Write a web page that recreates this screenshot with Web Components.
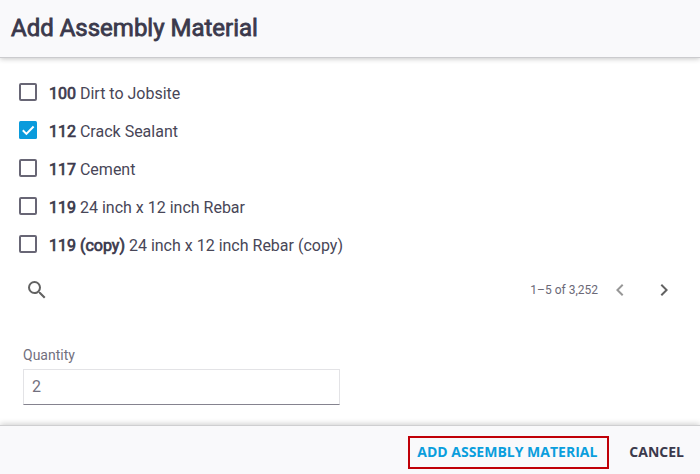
<!DOCTYPE html>
<html lang="en">
<head>
<meta charset="utf-8">
<title>Add Assembly Material</title>
<style>
body { margin: 0; font-family: Roboto, "Liberation Sans", sans-serif; color: #3b394c; background: #fff; }
</style>
</head>
<body>
<material-dialog>
  <span slot="title">Add Assembly Material</span>
  <check-row code="100">Dirt to Jobsite</check-row>
  <check-row code="112" checked>Crack Sealant</check-row>
  <check-row code="117">Cement</check-row>
  <check-row code="119">24 inch x 12 inch Rebar</check-row>
  <check-row code="119 (copy)">24 inch x 12 inch Rebar (copy)</check-row>
  <list-pager>1–5 of 3,252</list-pager>
  <text-field label="Quantity">2</text-field>
  <dialog-button slot="actions" primary>ADD ASSEMBLY MATERIAL</dialog-button>
  <dialog-button slot="actions">CANCEL</dialog-button>
</material-dialog>
<script>
class BaseElement extends HTMLElement {
  render(html) { this.attachShadow({ mode: 'open' }).innerHTML = html; }
}

customElements.define('material-dialog', class extends BaseElement {
  connectedCallback() {
    this.render(`<style>
      :host { display: flex; flex-direction: column; height: 474px; overflow: hidden; box-sizing: border-box; }
      header { height: 57px; box-sizing: border-box; padding: 0 11px; background: #f9f9fb; flex: none;
        box-shadow: 0 1px 0 #cbcbce, 0 2px 5px rgba(0,0,0,.22); }
      h1 { margin: 0; font-size: 24px; font-weight: 400; line-height: 56px; -webkit-text-stroke: .8px #3b394c; white-space: nowrap; }
      main { flex: 1; padding-top: 17px; }
      footer { height: 48px; box-sizing: border-box; flex: none; display: flex; justify-content: flex-end;
        padding: 10px 6px 5px 0; gap: 10px; background: #f9f9fb;
        box-shadow: 0 -1px 0 #cfcfd1, 0 -2px 6px rgba(0,0,0,.2); }
    </style>
    <header><h1><slot name="title"></slot></h1></header>
    <main><slot></slot></main>
    <footer><slot name="actions"></slot></footer>`);
  }
});

customElements.define('check-row', class extends BaseElement {
  connectedCallback() {
    const box = this.hasAttribute('checked')
      ? '<rect width="18" height="18" rx="1.5" fill="#0a9bdc"/><path d="M3.8 9.3l3.6 3.6 7.2-7.4" fill="none" stroke="#fff" stroke-width="2"/>'
      : '<rect x="1" y="1" width="16" height="16" rx="1" fill="none" stroke="#686675" stroke-width="2"/>';
    this.render(`<style>
      :host { display: flex; align-items: center; height: 38px; padding-left: 19px; gap: 12px; font-size: 16px; line-height: 20px; white-space: nowrap; color: #484657; }
      svg { width: 18px; height: 18px; flex: none; margin-bottom: 2px; }
      span { padding-top: 2px; }
      b { font-weight: 400; color: #3b394c; -webkit-text-stroke: .7px #3b394c; }
    </style>
    <svg viewBox="0 0 18 18">${box}</svg><span><b>${this.getAttribute('code')}</b> <slot></slot></span>`);
  }
});

customElements.define('list-pager', class extends BaseElement {
  connectedCallback() {
    this.render(`<style>
      :host { display: flex; align-items: center; height: 48px; margin-top: 2px; padding: 0 24px 0 25px; font-size: 12px; color: #6b6977; }
      svg { width: 24px; height: 24px; fill: #626262; }
      .search { margin-right: auto; }
      .prev { margin-left: 10px; fill: #979797; }
      .next { margin-left: 20px; }
    </style>
    <svg class="search" viewBox="0 0 24 24"><path d="M15.5 14h-.79l-.28-.27A6.47 6.47 0 0 0 16 9.5 6.5 6.5 0 1 0 9.5 16c1.61 0 3.09-.59 4.23-1.57l.27.28v.79l5 4.99L20.49 19l-4.99-5zm-6 0C7.01 14 5 11.99 5 9.5S7.01 5 9.5 5 14 7.01 14 9.5 11.99 14 9.5 14z"/></svg>
    <span><slot></slot></span>
    <svg class="prev" viewBox="0 0 24 24"><path d="M15.41 7.41L14 6l-6 6 6 6 1.41-1.41L10.83 12z"/></svg>
    <svg class="next" viewBox="0 0 24 24"><path d="M10 6L8.59 7.41 13.17 12l-4.58 4.59L10 18l6-6z"/></svg>`);
  }
});

customElements.define('text-field', class extends BaseElement {
  connectedCallback() {
    this.render(`<style>
      :host { display: block; margin: 33px 0 0 23px; width: 317px; color: #72707e; }
      label { display: block; font-size: 14px; line-height: 16px; margin-bottom: 6px; }
      div { height: 36px; box-sizing: border-box; border: 1px solid #e3e3e6; border-bottom-color: #85838f; padding-left: 8px; font-size: 16px; line-height: 34px; }
    </style>
    <label>${this.getAttribute('label')}</label><div><slot></slot></div>`);
  }
});

customElements.define('dialog-button', class extends BaseElement {
  connectedCallback() {
    this.render(`<style>
      :host { display: block; height: 33px; box-sizing: border-box; border: 2px solid transparent; padding: 0 8px; white-space: nowrap;
        font: 700 14px/27px "Open Sans", "Noto Sans", sans-serif; color: #3b394c; }
      :host([primary]) { border-color: #c00008; color: #0a9edd; padding: 0 10px 0 7px; }
    </style><slot></slot>`);
  }
});
</script>
</body>
</html>
